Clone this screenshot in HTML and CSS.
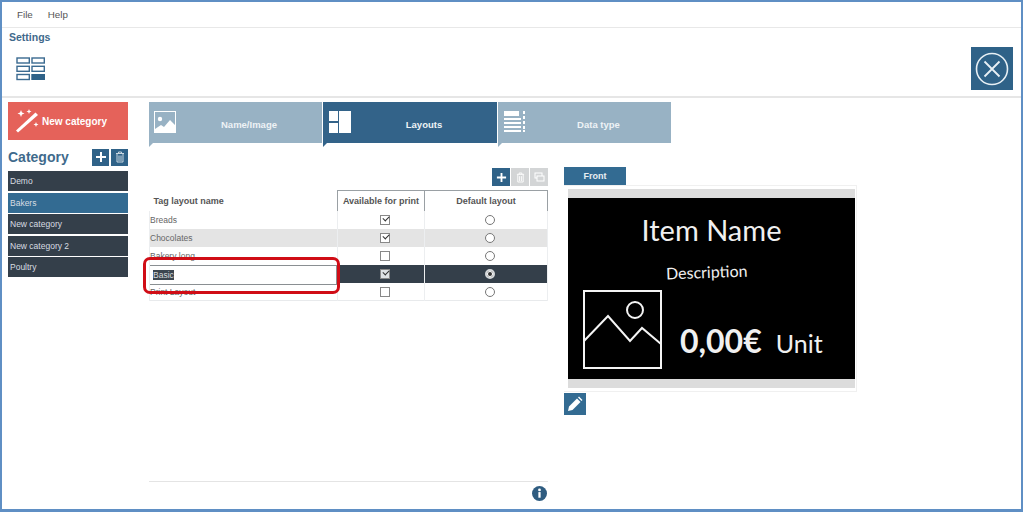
FILE: index.html
```html
<!DOCTYPE html>
<html lang="en">
<head>
<meta charset="utf-8">
<title>Settings</title>
<link rel="stylesheet" href="styles.css">
</head>
<body>
<div class="window">
  <nav class="menubar"><span>File</span><span>Help</span></nav>
  <header class="settings">
    <div class="settings-left">
      <div class="settings-title">Settings</div>
      <svg class="settings-icon" width="30" height="24" viewBox="0 0 30 24">
        <g fill="none" stroke="#3a6a90" stroke-width="1.4">
          <rect x="1" y="1" width="12.300" height="5"/><rect x="16" y="1" width="12.300" height="5"/>
          <rect x="1" y="9.300" width="12.300" height="5"/><rect x="16" y="9.300" width="12.300" height="5"/>
          <rect x="1" y="17.500" width="12.300" height="5"/>
        </g>
        <rect x="15.300" y="17" width="13.700" height="6" fill="#2f6288"/>
      </svg>
    </div>
    <button class="close-btn">
      <svg width="36" height="36" viewBox="0 0 36 36" fill="none" stroke="#e8f0f5"><circle cx="18" cy="18" r="15.500" stroke-width="1.600"/><path d="M10.500 10.500L25.500 25.500M25.500 10.500L10.500 25.500" stroke-width="1.800"/></svg>
    </button>
  </header>
  <main class="main">
    <aside class="sidebar">
      <button class="new-cat">
        <svg width="26" height="26" viewBox="0 0 26 26" fill="#fff"><path d="M4 24.500L2 22.500 21.500 4.500 24 7z"/><path d="M7 2l1 2.500 2.500 1-2.500 1-1 2.500-1-2.500-2.500-1 2.500-1zM15 1l.7 1.800 1.800.7-1.800.7-.7 1.800-.7-1.800-1.800-.7 1.800-.7zM22 14l.7 1.800 1.800.7-1.800.7-.7 1.800-.7-1.800-1.800-.7 1.800-.7z"/></svg>
        <span>New category</span>
      </button>
      <div class="cat-head">
        <h2>Category</h2>
        <button class="sq"><svg width="12" height="12" viewBox="0 0 12 12"><path d="M6 1v10M1 6h10" stroke="#fff" stroke-width="2"/></svg></button>
        <button class="sq"><svg width="10" height="12" viewBox="0 0 10 12" fill="none" stroke="#c8d6e0"><path d="M1 2.500h8M3.500 2.500V1h3v1.500M2 3v8h6V3M4 4.500V10M6 4.500V10"/></svg></button>
      </div>
      <ul class="cat-list">
        <li>Demo</li>
        <li class="active">Bakers</li>
        <li>New category</li>
        <li>New category 2</li>
        <li>Poultry</li>
      </ul>
    </aside>
    <section class="content">
      <div class="tabs">
        <div class="tab">
          <svg width="22" height="22" viewBox="0 0 22 22"><rect x=".5" y=".5" width="21" height="21" fill="none" stroke="#fff"/><circle cx="6" cy="8" r="2.200" fill="#fff"/><path d="M1 21v-3l6-4 3 2 6-7 5 5v7z" fill="#fff"/></svg>
          <span>Name/Image</span>
        </div>
        <div class="tab current">
          <svg width="22" height="22" viewBox="0 0 22 22" fill="#fff"><rect width="9" height="10"/><rect y="12" width="9" height="10"/><rect x="10" width="12" height="22"/></svg>
          <span>Layouts</span>
        </div>
        <div class="tab">
          <svg width="22" height="22" viewBox="0 0 22 22" fill="#fff"><rect width="15" height="5"/><rect y="7" width="17" height="2"/><rect y="11" width="17" height="2"/><rect y="15" width="17" height="2"/><rect y="19" width="17" height="2"/><rect x="19" width="2" height="3"/><rect x="19" y="5" width="2" height="3"/><rect x="19" y="10" width="2" height="3"/><rect x="19" y="15" width="2" height="3"/><rect x="19" y="19" width="2" height="2"/></svg>
          <span>Data type</span>
        </div>
      </div>
      <div class="workspace">
        <div class="layouts">
          <div class="toolbar">
            <button class="tool on"><svg width="11" height="11" viewBox="0 0 12 12"><path d="M6 1v10M1 6h10" stroke="#fff" stroke-width="2"/></svg></button>
            <button class="tool"><svg width="9" height="11" viewBox="0 0 10 12" fill="none" stroke="#fff"><path d="M1 2.500h8M3.500 2.500V1h3v1.500M2 3v8h6V3M4 4.500V10M6 4.500V10"/></svg></button>
            <button class="tool"><svg width="11" height="10" viewBox="0 0 11 10" fill="none" stroke="#fff"><rect x="1" y="1" width="7" height="5"/><rect x="3" y="4" width="7" height="5" fill="#d3d5d6"/></svg></button>
          </div>
          <table class="grid">
            <thead>
              <tr><th class="name">Tag layout name</th><th class="boxed">Available for print</th><th class="boxed">Default layout</th></tr>
            </thead>
            <tbody>
              <tr><td class="name">Breads</td><td><span class="check on"></span></td><td><span class="radio"></span></td></tr>
              <tr class="alt"><td class="name">Chocolates</td><td><span class="check on"></span></td><td><span class="radio"></span></td></tr>
              <tr><td class="name">Bakery long</td><td><span class="check"></span></td><td><span class="radio"></span></td></tr>
              <tr class="selected"><td class="name edit"><div class="editor"><span class="sel">Basic</span></div></td><td><span class="check on"></span></td><td><span class="radio on"></span></td></tr>
              <tr><td class="name">Print Layout</td><td><span class="check"></span></td><td><span class="radio"></span></td></tr>
            </tbody>
          </table>
          <div class="callout"></div>
        </div>
        <div class="preview">
          <div class="front-tab">Front</div>
          <div class="card">
            <div class="strip"></div>
            <div class="tag">
              <div class="tag-name">Item Name</div>
              <div class="tag-desc">Description</div>
              <div class="tag-row">
                <svg width="79" height="79" viewBox="0 0 79 79" fill="none" stroke="#f4f4f4" stroke-width="2"><rect x="1" y="1" width="77" height="77"/><circle cx="52" cy="20" r="8"/><path d="M1 51L25 26 47 51 59 38 78 54"/></svg>
                <div class="tag-price">0,00€</div>
                <div class="tag-unit">Unit</div>
              </div>
            </div>
            <div class="strip"></div>
          </div>
          <button class="pencil"><svg width="16" height="16" viewBox="0 0 16 16" fill="#fff"><path d="M1 15l1-4.500 8-8 3.500 3.500-8 8zM11 1.500l1-1 3.500 3.500-1 1z"/></svg></button>
        </div>
      </div>
      <footer class="foot">
        <svg width="15" height="15" viewBox="0 0 16 16"><circle cx="8" cy="8" r="8" fill="#2f5c80"/><rect x="6.800" y="6.500" width="2.400" height="6" fill="#fff"/><circle cx="8" cy="4.200" r="1.500" fill="#fff"/></svg>
      </footer>
    </section>
  </main>
</div>
</body>
</html>
```
FILE: styles.css
```css
* { box-sizing: border-box; }
html, body { margin: 0; padding: 0; }
body { width: 1023px; height: 512px; overflow: hidden; background: #fff; font-family: "Liberation Sans", Arial, sans-serif; color: #555; }
button { border: 0; padding: 0; margin: 0; cursor: pointer; font: inherit; display: flex; align-items: center; justify-content: center; }
.window { width: 1023px; height: 512px; border: 2px solid #5f8fc4; border-width: 2px 2px 3px 2px; display: flex; flex-direction: column; }

.menubar { height: 26px; flex: none; display: flex; gap: 15px; align-items: center; padding: 0 0 0 15px; font-size: 9.800px; color: #555; border-bottom: 1px solid #e8e8e8; }

.settings { height: 70px; flex: none; display: flex; justify-content: space-between; padding: 0 8px 0 7px; border-bottom: 2px solid #e6e6e6; }
.settings-title { font-size: 10.500px; font-weight: bold; color: #3f6a8c; margin-top: 3px; line-height: 13px; }
.settings-icon { display: block; margin: 13px 0 0 7px; }
.close-btn { width: 42px; height: 43px; background: #2f6288; margin-top: 19px; }

.main { flex: 1; display: flex; min-height: 0; padding: 4px 0 0 6px; }
.sidebar { width: 120px; flex: none; }
.new-cat { width: 120px; height: 38px; background: #e5625a; color: #fff; font-size: 10px; font-weight: bold; justify-content: flex-start; padding-left: 6px; gap: 2px; }
.new-cat span { margin-top: 1px; }
.cat-head { display: flex; align-items: center; gap: 2px; height: 18px; margin: 8px 0 5px; }
.cat-head h2 { flex: 1; margin: 0; font-size: 14px; line-height: 18px; color: #3f6a8c; font-weight: bold; }
.sq { width: 17px; height: 17px; background: #2f6288; }
.cat-list { list-style: none; margin: 0; padding: 0; display: flex; flex-direction: column; gap: 1.500px; }
.cat-list li { height: 20px; line-height: 20px; background: #343f4a; color: #d8dde2; font-size: 8.500px; padding-left: 2px; }
.cat-list li.active { background: #336b92; }

.content { width: 867px; margin-left: 21px; display: flex; flex-direction: column; flex: none; }
.tabs { display: flex; gap: 1px; flex: none; height: 45px; }
.tab { position: relative; width: 173px; height: 41px; background: #98b2c4; color: #eef3f6; font-size: 9.500px; font-weight: bold; display: flex; align-items: center; padding-left: 5px; }
.tab + .tab { padding-left: 6px; }
.tab span { flex: 1; text-align: center; margin-top: 4px; }
.tab svg { flex: none; margin-top: -2px; }
.tab::after { content: ""; position: absolute; left: 0; top: 41px; border-top: 4px solid #98b2c4; border-right: 4px solid transparent; }
.tab.current { background: #336389; width: 174px; }
.tab.current::after { border-top-color: #336389; }

.workspace { flex: 1; display: flex; min-height: 0; }
.layouts { position: relative; width: 399px; flex: none; }
.toolbar { display: flex; justify-content: flex-end; gap: 1px; height: 18px; margin-top: 21px; }
.tool { width: 18px; height: 18px; background: #d3d5d6; }
.tool.on { background: #2f6288; }
.grid { width: 399px; border-collapse: collapse; table-layout: fixed; margin-top: 4px; font-size: 8.500px; border-bottom: 1px solid #e8eaec; }
.grid th { height: 20px; font-size: 9px; font-weight: bold; color: #555; text-align: center; padding: 0; }
.grid th.name { width: 188px; text-align: left; padding-left: 4px; }
.grid th.boxed { border: 1px solid #9aa0a4; border-bottom: 0; }
.grid th:nth-child(2) { width: 87px; }
.grid td { height: 18px; padding: 0; text-align: center; border-right: 1px solid #eceef0; vertical-align: middle; }
.grid td.name { text-align: left; padding: 1px 0 0 0; color: #666; border-left: 1px solid #eceef0; }
.grid tr.alt td { background: #e4e4e4; }
.grid tr.selected td { background: #343f4a; }
.grid tr.selected td.edit { background: #fff; padding: 0; }
.editor { height: 20px; margin: 0 0 -2px -1px; border: 1px solid #8a8f92; padding: 3px 0 0 3px; line-height: 13px; background: #fff; }
.sel { background: #3c4650; color: #d5d9dd; }
.check { display: inline-block; vertical-align: middle; width: 10px; height: 10px; margin-left: 8px; border: 1px solid #888; background: #fff; position: relative; }
.check.on::after { content: ""; position: absolute; left: 1.500px; top: .5px; width: 5px; height: 3px; border: solid #333; border-width: 0 0 1.500px 1.500px; transform: rotate(-45deg); }
.selected .check { background: #dfe2e4; }
.radio { display: inline-block; vertical-align: middle; width: 10px; height: 10px; margin-left: 8px; border: 1px solid #777; border-radius: 50%; background: #fff; }
.selected .radio { border: 2px solid #d5d8da; background: #333; box-shadow: inset 0 0 0 1px #fff; }
.callout { position: absolute; left: -6px; top: 110px; width: 197px; height: 37px; border: 3px solid #d00d16; border-radius: 7px; pointer-events: none; }

.preview { margin-left: 16px; width: 296px; padding-top: 20px; }
.front-tab { width: 62px; height: 18px; background: #336b92; color: #e8eef3; font-size: 9px; font-weight: bold; text-align: center; line-height: 18px; }
.card { width: 293px; padding: 3px 1px 3px 4px; border: 1px solid #f0f0f0; border-left: 0; }
.strip { height: 9px; background: #dcdcdc; }
.tag { height: 181px; background: #000; color: #f0f0f0; display: flex; flex-direction: column; align-items: center; font-family: "Lato", sans-serif; }
.tag-name { font-size: 29px; line-height: 36px; margin-top: 14px; margin-left: 0; }
.tag-desc { font-size: 16px; line-height: 20px; margin: 14px 0 0 -10px; transform: rotate(-2deg); }
.tag-row { align-self: flex-start; display: flex; align-items: flex-end; margin-top: 8px; margin-left: 15px; }
.tag-row svg { flex: none; }
.tag-price { font-size: 32px; line-height: 38px; margin: 0 0 9px 18px; font-weight: bold; }
.tag-unit { font-size: 25px; line-height: 30px; margin: 0 0 11px 14px; }
.pencil { width: 22px; height: 22px; background: #336b92; margin-top: 1px; }

.foot { flex: none; height: 27px; margin-bottom: 1px; width: 399px; border-top: 1px solid #e4e4e4; position: relative; }
.foot svg { position: absolute; left: 383px; top: 4px; }
```
